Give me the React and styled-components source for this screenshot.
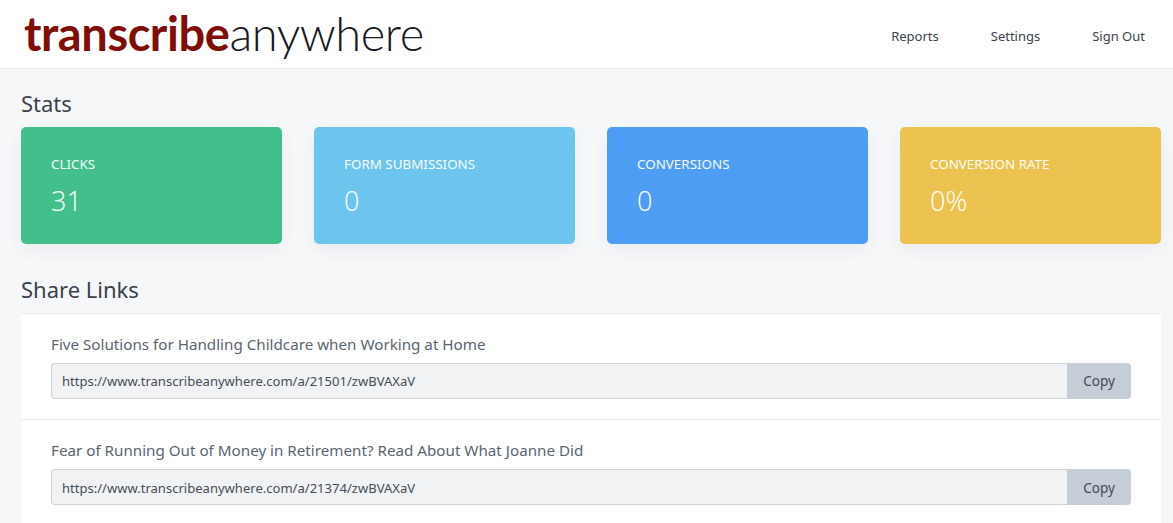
import React from "react";
import styled, { createGlobalStyle } from "styled-components";

const Global = createGlobalStyle`
  html, body { margin: 0; padding: 0; background: #f6f7f9; }
  body { font-family: "Noto Sans", "Open Sans", sans-serif; color: #343a40; overflow: hidden; }
  * { box-sizing: border-box; }
`;
const Page = styled.div`width: 1173px; height: 523px; overflow: hidden;`;
const Navbar = styled.header`
  height: 69px; background: #fff; border-bottom: 1px solid #e3e6ea;
  display: flex; align-items: center; justify-content: space-between; padding: 0 28px 0 24px;
`;
const Logo = styled.div`
  font-family: Lato, sans-serif; font-size: 47px; line-height: 69px; letter-spacing: -0.42px; color: #17191c; font-weight: 300;
  margin-top: -2px;
`;
const LogoStrong = styled.span`font-weight: 700; color: #7f0e08;`;
const Nav = styled.nav`display: flex; gap: 52px; margin-top: 6px;`;
const NavLink = styled.a`font-size: 13px; line-height: 20px; color: #3d4349; margin-top: -2px;`;
const Main = styled.main`padding: 0 12px 0 21px;`;
const SectionTitle = styled.h2`
  margin: 0; font-weight: 400; font-size: 22px; line-height: 32px; color: #3b4249;
`;
const StatsTitle = styled(SectionTitle)`margin-top: 18px; margin-bottom: 8px;`;
const LinksTitle = styled(SectionTitle)`margin-top: 29px; margin-bottom: 8px;`;
const Stats = styled.section`display: grid; grid-template-columns: repeat(4, 261px); gap: 32px;`;
const Card = styled.div`
  height: 117px; padding: 28px 30px 0; border-radius: 5px; background: ${p => p.$bg}; color: #fff;
  box-shadow: 0 6px 16px rgba(60, 70, 90, 0.06);
`;
const CardLabel = styled.div`font-size: 13.4px; line-height: 18px; text-transform: uppercase; opacity: 0.94;`;
const CardValue = styled.div`
  font-family: "Open Sans", sans-serif; font-weight: 300; font-size: 27px; line-height: 38px; margin-top: 9px;
`;
const LinkList = styled.section`background: #fff; border-top: 1px solid #e8eaed;`;
const LinkRow = styled.article`
  height: 105px; padding: 20px 30px 0;
  & + & { height: 106px; border-top: 1px solid #e8eaed; }
`;
const LinkName = styled.div`font-size: 15.2px; line-height: 21px; color: #5a6570; margin-bottom: 8px;`;
const InputGroup = styled.div`display: flex; height: 36px;`;
const UrlField = styled.div`
  flex: 1; background: #f0f2f4; border: 1px solid #cfd3d7; border-right: 0; border-radius: 4px 0 0 4px;
  padding: 0 10px; font-size: 13.05px; line-height: ${p => p.$lineHeight}px; color: #474e55;
`;
const CopyButton = styled.button`
  width: 64px; border: 0; background: #c5cdd6; border-radius: 0 4px 4px 0; padding: ${p => p.$nudge}px 0 0;
  font-family: inherit; font-size: 13.5px; color: #434b54;
`;

const cards = [
  ["Clicks", "31", "#43bf8c"],
  ["Form Submissions", "0", "#6dc4ed"],
  ["Conversions", "0", "#4e9df5"],
  ["Conversion Rate", "0%", "#ecc250"],
];
const links = [
  ["Five Solutions for Handling Childcare when Working at Home", "https://www.transcribeanywhere.com/a/21501/zwBVAXaV", 34, 0],
  ["Fear of Running Out of Money in Retirement? Read About What Joanne Did", "https://www.transcribeanywhere.com/a/21374/zwBVAXaV", 36, 2],
];

export default function App() {
  return (
    <Page>
      <Global />
      <Navbar>
        <Logo><LogoStrong>transcribe</LogoStrong>anywhere</Logo>
        <Nav>
          <NavLink>Reports</NavLink>
          <NavLink>Settings</NavLink>
          <NavLink>Sign Out</NavLink>
        </Nav>
      </Navbar>
      <Main>
        <StatsTitle>Stats</StatsTitle>
        <Stats>
          {cards.map(([label, value, bg]) => (
            <Card key={label} $bg={bg}>
              <CardLabel>{label}</CardLabel>
              <CardValue>{value}</CardValue>
            </Card>
          ))}
        </Stats>
        <LinksTitle>Share Links</LinksTitle>
        <LinkList>
          {links.map(([name, url, lineHeight, nudge]) => (
            <LinkRow key={url}>
              <LinkName>{name}</LinkName>
              <InputGroup>
                <UrlField $lineHeight={lineHeight}>{url}</UrlField>
                <CopyButton $nudge={nudge}>Copy</CopyButton>
              </InputGroup>
            </LinkRow>
          ))}
        </LinkList>
      </Main>
    </Page>
  );
}
